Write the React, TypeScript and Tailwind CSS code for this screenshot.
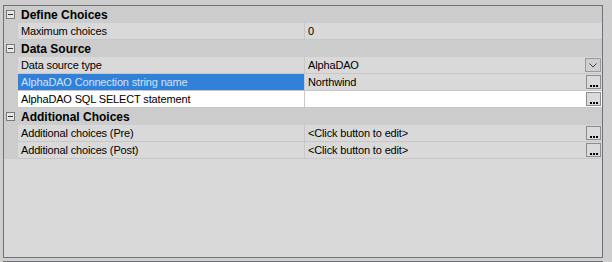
import React from "react";

function Minus() {
  return (
    <div className="w-[9px] h-[9px] border border-[#7a7a7a] bg-[#e6e6e6] flex items-center justify-center">
      <div className="w-[5px] h-px bg-[#333]" />
    </div>
  );
}

function Category({ title }: { title: string }) {
  return (
    <div className="flex items-center h-[17px] bg-[#cccccc]">
      <div className="w-[17px] pl-[2px] flex items-center">
        <Minus />
      </div>
      <div className="pl-[0px] font-bold text-[12px] leading-none text-black">{title}</div>
    </div>
  );
}

function Ellipsis() {
  return (
    <div className="w-[15px] h-[14px] border border-[#8c8c8c] bg-[#dadada] flex items-end justify-center pb-[1px] gap-[1px]">
      <div className="w-[2px] h-[2px] bg-black" />
      <div className="w-[2px] h-[2px] bg-black" />
      <div className="w-[2px] h-[2px] bg-black" />
    </div>
  );
}

function DropBtn() {
  return (
    <div className="w-[16px] h-[14px] border border-[#9a9a9a] bg-[#cfcfcf] flex items-center justify-center">
      <svg width="8" height="5" viewBox="0 0 8 5">
        <path d="M0.5 0.5 L4 4 L7.5 0.5" stroke="#444" strokeWidth="1" fill="none" />
      </svg>
    </div>
  );
}

function Prop({
  label,
  value,
  selected,
  white,
  btn,
}: {
  label: string;
  value?: string;
  selected?: boolean;
  white?: boolean;
  btn?: "drop" | "dots";
}) {
  const rowBg = white ? "bg-white" : "bg-[#d9d9d9]";
  return (
    <div className="flex h-[17px]">
      <div className="w-[14px] bg-[#cccccc]" />
      <div className={`flex flex-1 border-b border-[#c7c7c7] ${rowBg}`}>
        <div
          className={`w-[286px] pl-[3px] flex items-center text-[11px] leading-none tracking-[-0.15px] ${
            selected ? "bg-[#3181d8] text-[#d3e2f4]" : "text-black"
          }`}
        >
          {label}
        </div>
        <div className="w-px bg-[#c7c7c7]" />
        <div className="flex-1 flex items-center pl-[3px] pr-[1px] text-[11px] leading-none tracking-[-0.15px] text-black">
          <span className="flex-1">{value}</span>
          {btn === "drop" && <DropBtn />}
          {btn === "dots" && <Ellipsis />}
        </div>
      </div>
    </div>
  );
}

export default function App() {
  return (
    <div
      className="w-[612px] h-[262px] bg-[#cecece] flex flex-col pt-[5px] pl-[3px] overflow-hidden"
      style={{ fontFamily: '"Liberation Sans", Arial, sans-serif' }}
    >
      <div className="w-[600px] h-[253px] border border-[#6e6f78] bg-[#d9d9d9] flex flex-col">
        <Category title="Define Choices" />
        <Prop label="Maximum choices" value="0" />
        <Category title="Data Source" />
        <Prop label="Data source type" value="AlphaDAO" btn="drop" />
        <Prop label="AlphaDAO Connection string name" value="Northwind" selected btn="dots" />
        <Prop label="AlphaDAO SQL SELECT statement" value="" white btn="dots" />
        <Category title="Additional Choices" />
        <Prop label="Additional choices (Pre)" value="<Click button to edit>" btn="dots" />
        <Prop label="Additional choices (Post)" value="<Click button to edit>" btn="dots" />
      </div>
      <div className="mt-[3px] w-[600px] h-px bg-[#6e6f78]" />
    </div>
  );
}
